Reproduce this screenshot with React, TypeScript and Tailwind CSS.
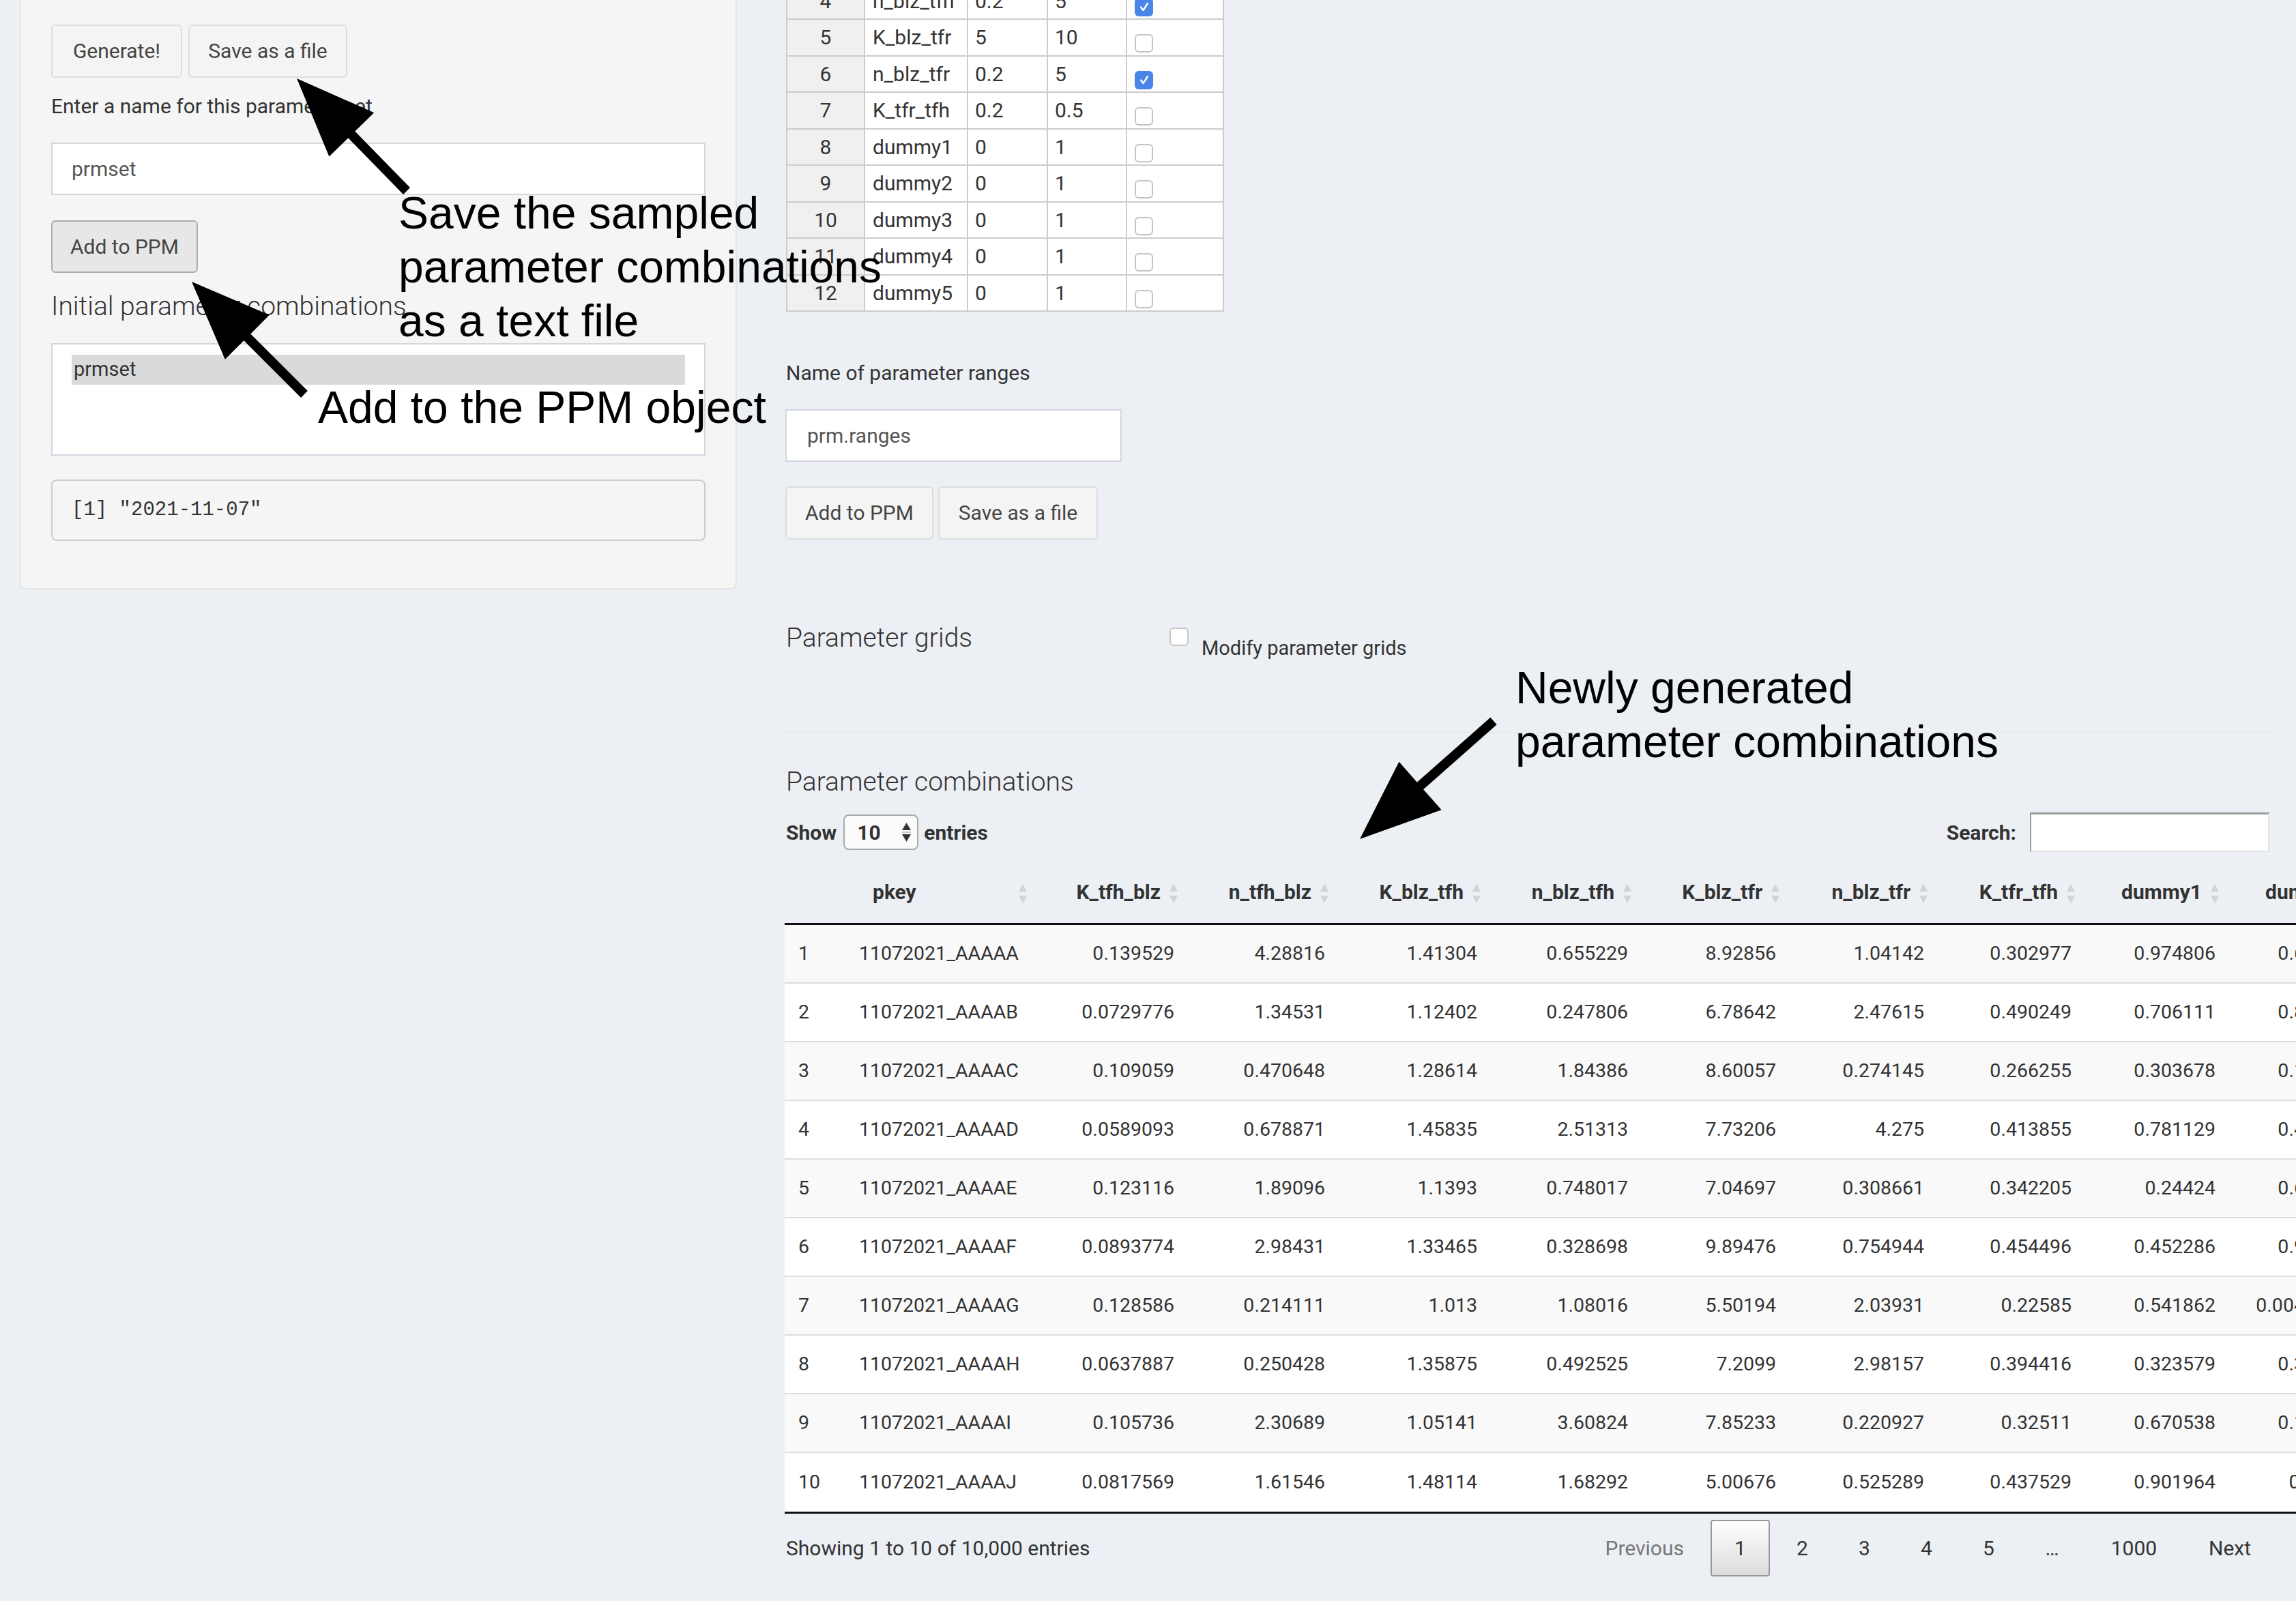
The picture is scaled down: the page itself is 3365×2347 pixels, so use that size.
import React from 'react'

type RangeRow = { n: number; name: string; min: string; max: string; on: boolean }

const rangeRows: RangeRow[] = [
  { n: 4, name: 'n_blz_tfh', min: '0.2', max: '5', on: true },
  { n: 5, name: 'K_blz_tfr', min: '5', max: '10', on: false },
  { n: 6, name: 'n_blz_tfr', min: '0.2', max: '5', on: true },
  { n: 7, name: 'K_tfr_tfh', min: '0.2', max: '0.5', on: false },
  { n: 8, name: 'dummy1', min: '0', max: '1', on: false },
  { n: 9, name: 'dummy2', min: '0', max: '1', on: false },
  { n: 10, name: 'dummy3', min: '0', max: '1', on: false },
  { n: 11, name: 'dummy4', min: '0', max: '1', on: false },
  { n: 12, name: 'dummy5', min: '0', max: '1', on: false },
]

const columns = [
  { key: '', w: 'w-[89px]', right: false },
  { key: 'pkey', w: 'w-[281px]', right: false },
  { key: 'K_tfh_blz', w: 'w-[221px]', right: true },
  { key: 'n_tfh_blz', w: 'w-[221px]', right: true },
  { key: 'K_blz_tfh', w: 'w-[223px]', right: true },
  { key: 'n_blz_tfh', w: 'w-[221px]', right: true },
  { key: 'K_blz_tfr', w: 'w-[217px]', right: true },
  { key: 'n_blz_tfr', w: 'w-[217px]', right: true },
  { key: 'K_tfr_tfh', w: 'w-[216px]', right: true },
  { key: 'dummy1', w: 'w-[211px]', right: true },
  { key: 'dummy2', w: 'w-[211px]', right: true },
]

const combos = [
  ['1', '11072021_AAAAA', '0.139529', '4.28816', '1.41304', '0.655229', '8.92856', '1.04142', '0.302977', '0.974806', '0.617343'],
  ['2', '11072021_AAAAB', '0.0729776', '1.34531', '1.12402', '0.247806', '6.78642', '2.47615', '0.490249', '0.706111', '0.815624'],
  ['3', '11072021_AAAAC', '0.109059', '0.470648', '1.28614', '1.84386', '8.60057', '0.274145', '0.266255', '0.303678', '0.152693'],
  ['4', '11072021_AAAAD', '0.0589093', '0.678871', '1.45835', '2.51313', '7.73206', '4.275', '0.413855', '0.781129', '0.441806'],
  ['5', '11072021_AAAAE', '0.123116', '1.89096', '1.1393', '0.748017', '7.04697', '0.308661', '0.342205', '0.24424', '0.609257'],
  ['6', '11072021_AAAAF', '0.0893774', '2.98431', '1.33465', '0.328698', '9.89476', '0.754944', '0.454496', '0.452286', '0.938713'],
  ['7', '11072021_AAAAG', '0.128586', '0.214111', '1.013', '1.08016', '5.50194', '2.03931', '0.22585', '0.541862', '0.00436592'],
  ['8', '11072021_AAAAH', '0.0637887', '0.250428', '1.35875', '0.492525', '7.2099', '2.98157', '0.394416', '0.323579', '0.350984'],
  ['9', '11072021_AAAAI', '0.105736', '2.30689', '1.05141', '3.60824', '7.85233', '0.220927', '0.32511', '0.670538', '0.178213'],
  ['10', '11072021_AAAAJ', '0.0817569', '1.61546', '1.48114', '1.68292', '5.00676', '0.525289', '0.437529', '0.901964', '0.58122'],
]

// arrow polygon: tip -> tail, triangular head
function arrowPoints(tip: [number, number], tail: [number, number], headLen = 115, headHalf = 46, shaftHalf = 7) {
  const dx = tail[0] - tip[0]
  const dy = tail[1] - tip[1]
  const len = Math.hypot(dx, dy)
  const ux = dx / len
  const uy = dy / len
  const px = -uy
  const py = ux
  const bx = tip[0] + ux * headLen
  const by = tip[1] + uy * headLen
  const pts = [
    [tip[0], tip[1]],
    [bx + px * headHalf, by + py * headHalf],
    [bx + px * shaftHalf, by + py * shaftHalf],
    [tail[0] + px * shaftHalf, tail[1] + py * shaftHalf],
    [tail[0] - px * shaftHalf, tail[1] - py * shaftHalf],
    [bx - px * shaftHalf, by - py * shaftHalf],
    [bx - px * headHalf, by - py * headHalf],
  ]
  return pts.map((p) => `${p[0].toFixed(1)},${p[1].toFixed(1)}`).join(' ')
}

function Btn({ children, active = false, w }: { children: React.ReactNode; active?: boolean; w: string }) {
  return (
    <div
      className={`${w} h-[78px] flex items-center justify-center rounded-[6px] border-2 text-[30px] leading-[40px] text-[#444] ${
        active ? 'bg-[#e7e7e7] border-[#adadad]' : 'bg-[#f4f4f4] border-[#dddddd]'
      }`}
    >
      {children}
    </div>
  )
}

function SortIcon() {
  return (
    <svg className="absolute right-[14px] bottom-[27px] w-[14px] h-[32px]" viewBox="0 0 14 32">
      <polygon points="7,2 13,13 1,13" fill="#d0d3d8" />
      <polygon points="1,19 13,19 7,30" fill="#d0d3d8" />
    </svg>
  )
}

function CheckBox({ on }: { on: boolean }) {
  if (on) {
    return (
      <div className="w-[27px] h-[27px] rounded-[6px] bg-[#4a86e8] flex items-center justify-center">
        <svg className="w-[18px] h-[18px]" viewBox="0 0 18 18" fill="none">
          <path d="M4 9.5 L7.5 14 L14 4" stroke="white" strokeWidth="2.4" strokeLinecap="round" strokeLinejoin="round" />
        </svg>
      </div>
    )
  }
  return <div className="w-[27px] h-[27px] rounded-[6px] border-2 border-[#c4c4c4] bg-white" />
}

function PageBtn({ children, current = false, muted = false, w = '' }: { children: React.ReactNode; current?: boolean; muted?: boolean; w?: string }) {
  return (
    <div
      className={`h-[83px] min-w-[87px] ${w} px-[33px] flex items-center justify-center rounded-[4px] border-2 text-[30px] ${
        current ? 'border-[#979797] bg-gradient-to-b from-white to-[#dcdcdc]' : 'border-transparent'
      } ${muted ? 'text-[#777]' : 'text-[#333]'}`}
    >
      {children}
    </div>
  )
}

export default function App() {
  return (
    <div className="relative w-[3365px] h-[2347px] overflow-hidden bg-[#ecf0f5] font-['Roboto',sans-serif] text-[#333]">
      <div className="flex">
        {/* left column: sampling panel */}
        <div className="w-[1150px] shrink-0">
          <div className="ml-[29px] w-[1051px] h-[864px] bg-[#f5f5f5] border-x-2 border-b-2 border-[#e3e3e3] rounded-b-[8px] px-[44px] pt-[36px] flex flex-col">
            <div className="flex gap-[9px]">
              <Btn w="w-[192px]">Generate!</Btn>
              <Btn w="w-[233px]">Save as a file</Btn>
            </div>
            <div className="mt-[22px] text-[30px] leading-[40px]">Enter a name for this parameter set</div>
            <div className="mt-[33px] h-[77px] bg-white border-2 border-[#d2d6de] flex items-center pl-[28px] text-[30px] text-[#555]">
              prmset
            </div>
            <div className="mt-[37px] w-[215px] h-[77px] flex items-center justify-center rounded-[6px] border-2 bg-[#e7e7e7] border-[#adadad] text-[30px] text-[#444]">
              Add to PPM
            </div>
            <div className="mt-[25px] text-[39px] leading-[48px] font-light">Initial parameter combinations</div>
            <div className="mt-[30px] h-[165px] bg-white border-2 border-[#d2d6de] px-[28px] pt-[15px]">
              <div className="h-[44px] bg-[#dadada] flex items-center pl-[3px] text-[29px]">prmset</div>
            </div>
            <div className="mt-[35px] h-[90px] bg-[#f5f5f5] border-2 border-[#cccccc] rounded-[8px] flex items-center pl-[28px] font-['Liberation_Mono',monospace] text-[29px] text-[#333]">
              [1] &quot;2021-11-07&quot;
            </div>
          </div>
        </div>

        {/* right column */}
        <div className="w-[2182px] shrink-0 flex flex-col">
          {/* parameter ranges table */}
          <div className="-mt-[24.5px] ml-[2px] w-[642px] border-l-2 border-[#cccccc] text-[30px]">
            {rangeRows.map((r) => (
              <div key={r.n} className="flex h-[53.5px] border-b-2 border-[#cccccc]">
                <div className="w-[114px] bg-[#f0f0f0] border-r-2 border-[#cccccc] flex items-center justify-center">{r.n}</div>
                <div className="w-[151px] bg-white border-r-2 border-[#cccccc] flex items-center pl-[11px]">{r.name}</div>
                <div className="w-[117px] bg-white border-r-2 border-[#cccccc] flex items-center pl-[10px]">{r.min}</div>
                <div className="w-[116px] bg-white border-r-2 border-[#cccccc] flex items-center pl-[10px]">{r.max}</div>
                <div className="w-[142px] bg-white border-r-2 border-[#cccccc] pl-[11px] pt-[21px]">
                  <CheckBox on={r.on} />
                </div>
              </div>
            ))}
          </div>

          <div className="mt-[70px] ml-[2px] text-[30px] leading-[40px]">Name of parameter ranges</div>
          <div className="mt-[33px] ml-[1px] w-[493px] h-[77px] bg-white border-2 border-[#d2d6de] flex items-center pl-[30px] text-[30px] text-[#555]">
            prm.ranges
          </div>
          <div className="mt-[36px] ml-[1px] flex gap-[7px]">
            <Btn w="w-[217px]">Add to PPM</Btn>
            <Btn w="w-[234px]">Save as a file</Btn>
          </div>

          {/* parameter grids */}
          <div className="mt-[120px] flex h-[59px]">
            <div className="ml-[2px] w-[562px] text-[39px] leading-[48px] font-light">Parameter grids</div>
            <div className="mt-[9px] w-[28px] h-[27px] rounded-[6px] border-2 border-[#c7c7c7] bg-white" />
            <div className="ml-[19px] mt-[19px] text-[29px] leading-[40px]">Modify parameter grids</div>
          </div>
          <div className="mt-[103px] border-t-2 border-[#e8e7eb]" />

          {/* parameter combinations */}
          <div className="mt-[47px] ml-[2px] text-[39px] leading-[48px] font-light">Parameter combinations</div>
          <div className="mt-[20px] h-[60px] flex items-center justify-between">
            <div className="flex items-center font-bold text-[30px] ml-[2px]">
              <span>Show</span>
              <div className="ml-[10px] w-[110px] h-[52px] rounded-[8px] border-2 border-[#aaaaaa] bg-[#fbfbfb] flex items-center justify-between pl-[18px] pr-[8px]">
                <span>10</span>
                <svg className="w-[15px] h-[30px]" viewBox="0 0 15 30">
                  <polygon points="7.5,1 14,12 1,12" fill="#333" />
                  <rect x="1" y="14.5" width="13" height="1" fill="#888" />
                  <polygon points="1,18 14,18 7.5,29" fill="#333" />
                </svg>
              </div>
              <span className="ml-[8px]">entries</span>
            </div>
            <div className="flex items-center mr-[6px]">
              <span className="font-bold text-[30px]">Search:</span>
              <div className="ml-[20px] w-[351px] h-[58px] bg-white border-2 border-t-[3px] border-t-[#9a9a9a] border-l-[#9a9a9a] border-r-[#e4e4e4] border-b-[#e4e4e4]" />
            </div>
          </div>

          {/* data table */}
          <div className="w-[2328px]">
            <div className="flex h-[103px]">
              {columns.map((c) => (
                <div
                  key={c.key || 'idx'}
                  className={`relative shrink-0 ${c.w} flex items-end pb-[25px] ${c.right ? 'justify-end pr-[40px]' : c.key ? 'pl-[40px]' : 'pl-[20px]'}`}
                >
                  <span className="font-bold text-[30px] leading-[40px] whitespace-nowrap">{c.key}</span>
                  {c.key && <SortIcon />}
                </div>
              ))}
            </div>
            <div className="h-[3px] bg-[#111]" />
            {combos.map((row, i) => (
              <div
                key={row[0]}
                className={`flex h-[86px] ${i % 2 === 0 ? 'bg-[#f9f9f9]' : 'bg-white'} ${i < combos.length - 1 ? 'border-b-2 border-[#dddddd]' : ''}`}
              >
                {columns.map((c, j) => (
                  <div
                    key={j}
                    className={`shrink-0 ${c.w} px-[20px] flex items-center text-[28.5px] whitespace-nowrap ${c.right ? 'justify-end' : ''}`}
                  >
                    {row[j]}
                  </div>
                ))}
              </div>
            ))}
            <div className="h-[3px] bg-[#111]" />
          </div>

          <div className="mt-[9px] flex items-center justify-between">
            <div className="ml-[2px] text-[30px]">Showing 1 to 10 of 10,000 entries</div>
            <div className="flex gap-[4px] -mr-[2px]">
              <PageBtn muted>Previous</PageBtn>
              <PageBtn current>1</PageBtn>
              <PageBtn>2</PageBtn>
              <PageBtn>3</PageBtn>
              <PageBtn>4</PageBtn>
              <PageBtn>5</PageBtn>
              <div className="h-[83px] w-[91px] flex items-center justify-center text-[30px]">…</div>
              <PageBtn w="w-[141px]">1000</PageBtn>
              <PageBtn>Next</PageBtn>
            </div>
          </div>
        </div>
      </div>

      {/* annotations drawn over the app */}
      <svg className="absolute inset-0 w-[3365px] h-[2347px] pointer-events-none" viewBox="0 0 3365 2347">
        <polygon points={arrowPoints([435, 115], [596, 280])} fill="#000" />
        <polygon points={arrowPoints([281, 413], [446, 578])} fill="#000" />
        <polygon points={arrowPoints([1993, 1230], [2189, 1057], 118, 47)} fill="#000" />
      </svg>
      <div className="absolute left-[584px] top-[273px] font-['Liberation_Sans',Arial,sans-serif] text-[66px] leading-[79px] text-black whitespace-nowrap">
        Save the sampled
        <br />
        parameter combinations
        <br />
        as a text file
      </div>
      <div className="absolute left-[466px] top-[558px] font-['Liberation_Sans',Arial,sans-serif] text-[66px] leading-[79px] text-black whitespace-nowrap">
        Add to the PPM object
      </div>
      <div className="absolute left-[2221px] top-[969px] font-['Liberation_Sans',Arial,sans-serif] text-[66px] leading-[79px] text-black whitespace-nowrap">
        Newly generated
        <br />
        parameter combinations
      </div>
    </div>
  )
}
